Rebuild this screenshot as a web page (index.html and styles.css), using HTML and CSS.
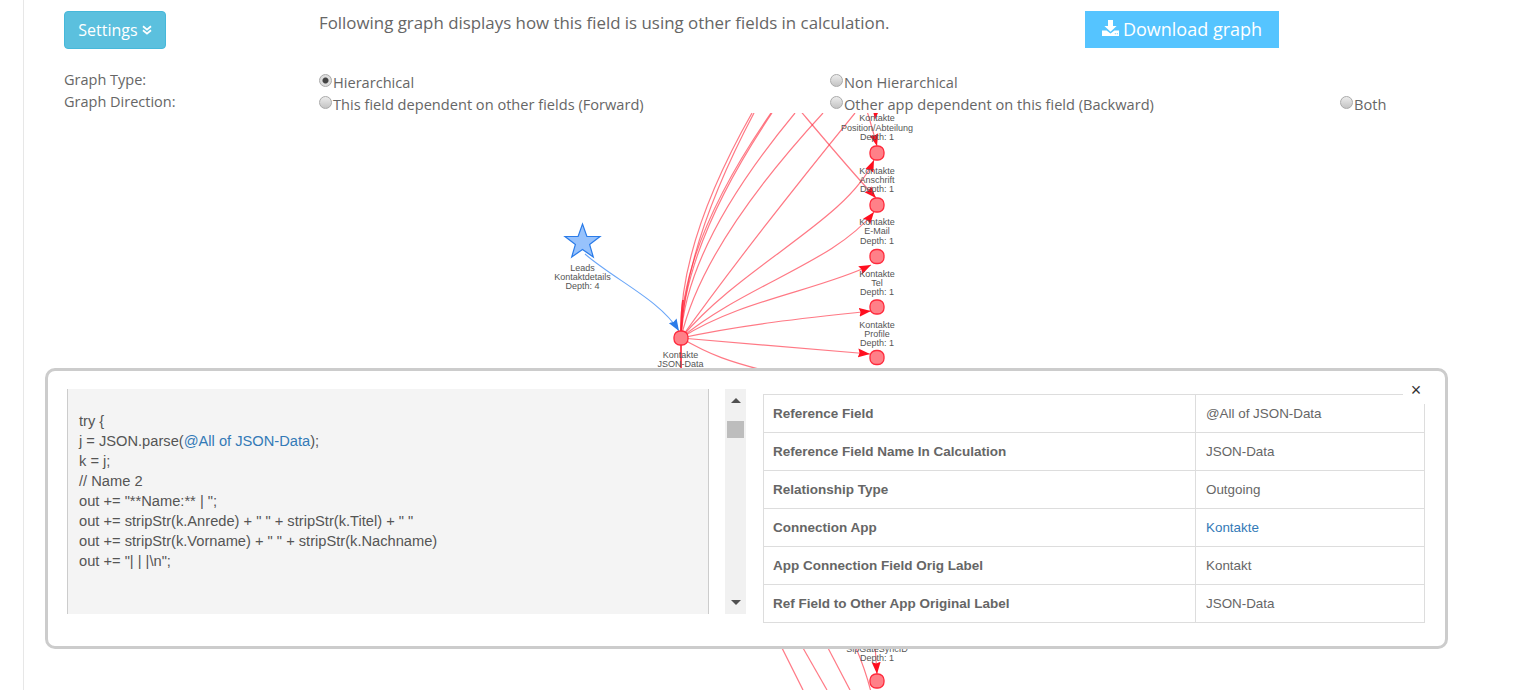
FILE: index.html
```html
<!DOCTYPE html>
<html lang="en">
<head>
    <meta charset="UTF-8">
    <title>Field dependency graph</title>
    <link rel="stylesheet" href="styles.css">
</head>
<body>
    <div class="page">
        <div class="topRow">
            <a class="settingsBtn" href="javascript:;">Settings
                <svg class="chevrons" viewBox="0 0 10 10"><path d="M1 1.2 5 4.6 9 1.2M1 5.2 5 8.6 9 5.2"/></svg>
            </a>
            <p class="intro">Following graph displays how this field is using other fields in calculation.</p>
            <a class="downloadBtn" href="javascript:;">
                <svg class="downloadIcon" viewBox="0 0 17 16"><path d="M6 0h5v6h3.600L8.500 11.800 2.400 6H6z"/><path d="M0 10.500h4.600l3.900 3 3.900-3H17V16H0zM12.800 13.200v1h1v-1zM14.800 13.200v1h1v-1z" fill-rule="evenodd"/></svg>
                Download graph
            </a>
        </div>
        <div class="options">
            <span class="optLabel">Graph Type:</span>
            <label class="opt"><input type="radio" name="gtype" checked>Hierarchical</label>
            <label class="opt"><input type="radio" name="gtype">Non Hierarchical</label>
            <span></span>
            <span class="optLabel">Graph Direction:</span>
            <label class="opt"><input type="radio" name="gdir">This field dependent on other fields (Forward)</label>
            <label class="opt"><input type="radio" name="gdir">Other app dependent on this field (Backward)</label>
            <label class="opt"><input type="radio" name="gdir">Both</label>
        </div>
    </div>

    <svg class="graph" width="1513" height="577" viewBox="0 113 1513 577">
        <defs>
            <marker id="redHead" markerUnits="userSpaceOnUse" markerWidth="13" markerHeight="10" refX="12" refY="5" orient="auto">
                <path d="M0 0.500 12 5 0 9.500 1.500 5z" fill="#ff0f1f"/>
            </marker>
            <marker id="blueHead" markerUnits="userSpaceOnUse" markerWidth="13" markerHeight="10" refX="12" refY="5" orient="auto">
                <path d="M0 0.500 12 5 0 9.500 1.500 5z" fill="#2b7ce9"/>
            </marker>
        </defs>

        <g class="edges">
            <!-- leaving the top of the canvas -->
            <path d="M681 338Q677.500 244.500 752 113"/>
            <path d="M681 338Q684.500 244.500 754 113"/>
            <path d="M681 338Q680 244.500 771 113"/>
            <path d="M681 338Q683.500 244.500 772 113"/>
            <path d="M681 338Q686 244.500 795 113"/>
            <path d="M681 338Q702 244.500 823 113"/>
            <path d="M681 338Q748 244.500 855 113"/>
            <!-- to the column of fields -->
            <path d="M681 338C742 265 848 220 874 160" marker-end="url(#redHead)"/>
            <path d="M681 338C745 285 835 262 874 212" marker-end="url(#redHead)"/>
            <path d="M681 338C740 300 820 290 871 265" marker-end="url(#redHead)"/>
            <path d="M681 338C740 325 805 318 871 311" marker-end="url(#redHead)"/>
            <path d="M681 338C740 343 800 348 870 354" marker-end="url(#redHead)"/>
            <path d="M681 338C710 355 730 362 770 372"/>
            <path d="M798 108C825 140 850 170 876 198" marker-end="url(#redHead)"/>
            <path d="M866 108C870 120 874 135 877 146" marker-end="url(#redHead)"/>
            <path d="M877 100 875 119" marker-end="url(#redHead)"/>
            <path d="M782 648 803 690"/>
            <path d="M803 648 827 690"/>
            <path d="M828 648 850 690"/>
            <path d="M856 648C862 662 867 676 871 692"/>
            <path d="M875 645 877 674" marker-end="url(#redHead)"/>
            <!-- the edges bunch up round the source node -->
            <path class="bundle" d="M681 338C681 325 681.500 312 683 300"/>
            <path class="bundle" d="M681 338 681 372"/>
        </g>
        <path class="edgeBlue" d="M585 254C615 280 660 300 679 331" marker-end="url(#blueHead)"/>

        <polygon class="star" points="582.500,224 586.900,236.500 600,236.500 589.600,244.500 593.300,257 582.500,249.500 571.700,257 575.400,244.500 565,236.500 578.100,236.500"/>
        <rect class="node" x="674" y="331" width="14" height="14" rx="6"/>
        <rect class="node" x="870" y="146" width="14" height="14" rx="6"/>
        <rect class="node" x="870" y="198" width="14" height="14" rx="6"/>
        <rect class="node" x="870" y="249.500" width="14" height="14" rx="6"/>
        <rect class="node" x="870" y="300" width="14" height="14" rx="6"/>
        <rect class="node" x="870" y="350.500" width="14" height="14" rx="6"/>
        <rect class="node" x="870" y="674" width="14" height="14" rx="6"/>

        <g class="labels">
            <text x="582.500" y="271">Leads</text>
            <text x="582.500" y="280">Kontaktdetails</text>
            <text x="582.500" y="289">Depth: 4</text>
            <text x="680.500" y="358">Kontakte</text>
            <text x="680.500" y="367">JSON-Data</text>
            <text x="877" y="121">Kontakte</text>
            <text x="877" y="131">Position/Abteilung</text>
            <text x="877" y="140">Depth: 1</text>
            <text x="877" y="174">Kontakte</text>
            <text x="877" y="183">Anschrift</text>
            <text x="877" y="192">Depth: 1</text>
            <text x="877" y="225">Kontakte</text>
            <text x="877" y="234">E-Mail</text>
            <text x="877" y="244">Depth: 1</text>
            <text x="877" y="277">Kontakte</text>
            <text x="877" y="286">Tel</text>
            <text x="877" y="295">Depth: 1</text>
            <text x="877" y="328">Kontakte</text>
            <text x="877" y="337">Profile</text>
            <text x="877" y="346">Depth: 1</text>
            <text x="877" y="652">SipGateSyncID</text>
            <text x="877" y="661">Depth: 1</text>
        </g>
    </svg>

    <div class="modal">
        <a class="closeBtn" href="javascript:;">&times;</a>
        <div class="codeBox">try {
j = JSON.parse(<a href="javascript:;">@All of JSON-Data</a>);
k = j;
// Name 2
out += "**Name:** | ";
out += stripStr(k.Anrede) + " " + stripStr(k.Titel) + " "
out += stripStr(k.Vorname) + " " + stripStr(k.Nachname)
out += "| | |\n";</div>
        <div class="scrollTrack">
            <span class="arrowUp"></span>
            <span class="thumb"></span>
            <span class="arrowDown"></span>
        </div>
        <table class="infoTable">
            <tr><th>Reference Field</th><td>@All of JSON-Data</td></tr>
            <tr><th>Reference Field Name In Calculation</th><td>JSON-Data</td></tr>
            <tr><th>Relationship Type</th><td>Outgoing</td></tr>
            <tr><th>Connection App</th><td><a href="javascript:;">Kontakte</a></td></tr>
            <tr><th>App Connection Field Orig Label</th><td>Kontakt</td></tr>
            <tr><th>Ref Field to Other App Original Label</th><td>JSON-Data</td></tr>
        </table>
    </div>
</body>
</html>
```

FILE: styles.css
```css
* {
    margin: 0;
    padding: 0;
    box-sizing: border-box;
}

html,
body {
    height: 100%;
    overflow: hidden;
    background: #fff;
}

body {
    font-family: "Open Sans", "Liberation Sans", sans-serif;
    color: #666;
}

a {
    text-decoration: none;
}

.page {
    height: 690px;
    margin-left: 23px;
    padding: 11px 0 0 40px;
    border-left: 1px solid #e7e7e7;
}

.topRow {
    display: flex;
    align-items: flex-start;
}

.settingsBtn {
    display: flex;
    align-items: center;
    justify-content: center;
    gap: 4px;
    width: 102px;
    height: 38px;
    border: 1px solid #46b8da;
    border-radius: 4px;
    background: #5bc0de;
    color: #fff;
    font-size: 16px;
}

.chevrons {
    width: 10px;
    height: 10px;
    fill: none;
    stroke: #fff;
    stroke-width: 1.800;
}

.intro {
    width: 766px;
    margin-left: 153px;
    font-size: 16.880px;
    line-height: 23px;
}

.downloadBtn {
    display: flex;
    align-items: center;
    justify-content: center;
    gap: 4px;
    width: 194px;
    height: 37px;
    padding-bottom: 2px;
    background: #55c4ff;
    color: #fff;
    font-size: 18px;
}

.downloadIcon {
    width: 17px;
    height: 16px;
    fill: #fff;
    margin-top: -1px;
}

.options {
    display: grid;
    grid-template-columns: 255px 511px 510px 1fr;
    grid-auto-rows: 22px;
    margin-top: 20px;
    font-size: 14.500px;
}

.optLabel {
    line-height: 22px;
}

.opt {
    display: flex;
    align-items: center;
    padding-top: 4px;
    font-size: 14.600px;
    line-height: 22px;
}

.opt input {
    appearance: none;
    width: 13px;
    height: 13px;
    margin: -4px 1px 0 0;
    border: 1px solid #aaa;
    border-radius: 50%;
    background: linear-gradient(#ececec, #c4c4c4);
    flex: none;
}

.opt input:checked {
    background: radial-gradient(circle, #444 0, #444 2.500px, #ddd 3.500px);
}

.graph {
    position: absolute;
    left: 0;
    top: 113px;
}

.edges path {
    fill: none;
    stroke: #ff1f33;
    stroke-opacity: 0.6;
    stroke-width: 1.200;
}

.edges .bundle {
    stroke-opacity: 0.8;
    stroke-width: 2;
}

.edgeBlue {
    fill: none;
    stroke: #6aa6f8;
    stroke-width: 1.100;
}

.star {
    fill: #97c2fc;
    stroke: #2b7ce9;
    stroke-width: 1.200;
}

.node {
    fill: #ff8088;
    stroke: #ff2a3c;
    stroke-width: 1.300;
}

.labels text {
    font-family: "Liberation Sans", sans-serif;
    font-size: 9px;
    fill: #555;
    text-anchor: middle;
}

.modal {
    position: absolute;
    left: 45px;
    top: 368px;
    width: 1403px;
    height: 281px;
    display: flex;
    align-items: flex-start;
    padding: 18px 0 0 19px;
    border: 3px solid #ccc;
    border-radius: 10px;
    background: #fff;
    font-family: "Liberation Sans", Arial, sans-serif;
    font-size: 14px;
}

.closeBtn {
    position: absolute;
    right: 16px;
    top: 5px;
    width: 26px;
    height: 28px;
    background: #fff;
    color: #333;
    font-size: 18px;
    line-height: 28px;
    text-align: center;
}

.codeBox {
    width: 642px;
    height: 225px;
    padding: 22px 0 0 11px;
    border-left: 1px solid #ccc;
    border-right: 1px solid #ccc;
    background: #f4f4f4;
    color: #555;
    font-size: 14.660px;
    line-height: 20px;
    white-space: pre-wrap;
}

.codeBox a,
.infoTable a {
    color: #337ab7;
}

.scrollTrack {
    display: flex;
    flex-direction: column;
    align-items: center;
    width: 21px;
    height: 225px;
    margin-left: 16px;
    padding-top: 9px;
    background: #f1f1f1;
}

.arrowUp {
    border: 5px solid transparent;
    border-top: 0;
    border-bottom: 5px solid #505050;
}

.thumb {
    width: 17px;
    height: 17px;
    margin-top: 18px;
    background: #bdbdbd;
}

.arrowDown {
    margin-top: 162px;
    border: 5px solid transparent;
    border-bottom: 0;
    border-top: 5px solid #505050;
}

.infoTable {
    width: 662px;
    margin: 5px 0 0 17px;
    border-collapse: collapse;
    table-layout: fixed;
}

.infoTable tr {
    height: 38px;
}

.infoTable th,
.infoTable td {
    padding: 0 10px;
    border: 1px solid #ddd;
    text-align: left;
    color: #666;
    font-size: 13.400px;
}

.infoTable th {
    width: 432px;
    padding-left: 9px;
    font-size: 13.500px;
    font-weight: bold;
}
```
